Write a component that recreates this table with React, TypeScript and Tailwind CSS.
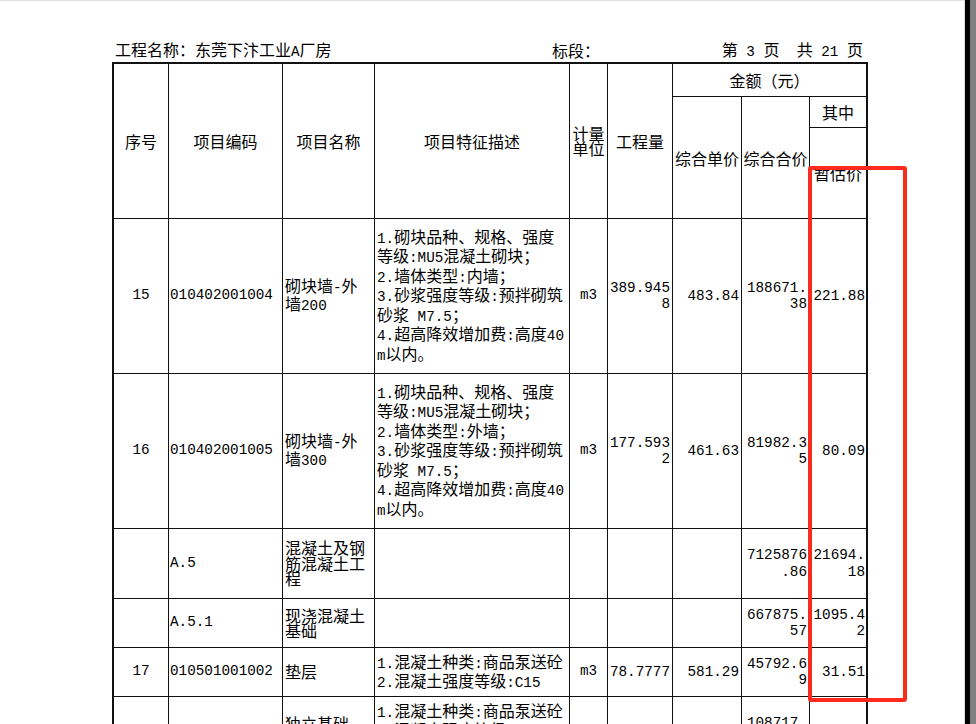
import React from "react";

const MONO = "font-['Liberation_Mono',monospace] text-[14.3px]";

function T({ s }: { s: string }) {
  const parts = s.split(/([\x20-\x7e]+)/);
  return (
    <>
      {parts.map((p, i) =>
        p === "" ? null : /^[\x20-\x7e]+$/.test(p) ? (
          <span key={i} className={MONO}>
            {p}
          </span>
        ) : (
          <React.Fragment key={i}>{p}</React.Fragment>
        )
      )}
    </>
  );
}

type Row = {
  no: string;
  code: string;
  name: string[];
  desc: string[];
  unit: string;
  qty: string[];
  price: string[];
  total: string[];
  est: string[];
};

const rows: Row[] = [
  {
    no: "15",
    code: "010402001004",
    name: ["砌块墙-外", "墙200"],
    desc: [
      "1.砌块品种、规格、强度",
      "等级:MU5混凝土砌块；",
      "2.墙体类型:内墙；",
      "3.砂浆强度等级:预拌砌筑",
      "砂浆 M7.5；",
      "4.超高降效增加费:高度40",
      "m以内。",
    ],
    unit: "m3",
    qty: ["389.945", "8"],
    price: ["483.84"],
    total: ["188671.", "38"],
    est: ["221.88"],
  },
  {
    no: "16",
    code: "010402001005",
    name: ["砌块墙-外", "墙300"],
    desc: [
      "1.砌块品种、规格、强度",
      "等级:MU5混凝土砌块；",
      "2.墙体类型:外墙；",
      "3.砂浆强度等级:预拌砌筑",
      "砂浆 M7.5；",
      "4.超高降效增加费:高度40",
      "m以内。",
    ],
    unit: "m3",
    qty: ["177.593", "2"],
    price: ["461.63"],
    total: ["81982.3", "5"],
    est: ["80.09"],
  },
  {
    no: "",
    code: "A.5",
    name: ["混凝土及钢", "筋混凝土工", "程"],
    desc: [],
    unit: "",
    qty: [],
    price: [],
    total: ["7125876", ".86"],
    est: ["21694.", "18"],
  },
  {
    no: "",
    code: "A.5.1",
    name: ["现浇混凝土", "基础"],
    desc: [],
    unit: "",
    qty: [],
    price: [],
    total: ["667875.", "57"],
    est: ["1095.4", "2"],
  },
  {
    no: "17",
    code: "010501001002",
    name: ["垫层"],
    desc: ["1.混凝土种类:商品泵送砼", "2.混凝土强度等级:C15"],
    unit: "m3",
    qty: ["78.7777"],
    price: ["581.29"],
    total: ["45792.6", "9"],
    est: ["31.51"],
  },
  {
    no: "18",
    code: "010501003001",
    name: ["独立基础、", "桩承台基础"],
    desc: ["1.混凝土种类:商品泵送砼", "2.混凝土强度等级:C30", "3.部位:承台"],
    unit: "m3",
    qty: ["54.2134"],
    price: ["581.29"],
    total: ["108717.", "35"],
    est: ["74.86"],
  },
];

function Cell({ className = "", children }: { className?: string; children?: React.ReactNode }) {
  return <div className={"bg-white flex items-center min-w-0 " + className}>{children}</div>;
}

function Num({ v, pr = "pr-[2px]" }: { v: string[]; pr?: string }) {
  return (
    <Cell>
      <div className={"w-full text-right whitespace-pre leading-[16.5px] " + pr + " " + MONO}>
        {v.map((l, i) => (
          <div key={i}>{l}</div>
        ))}
      </div>
    </Cell>
  );
}

export default function App() {
  return (
    <div className="relative flex h-[724px] w-[976px] overflow-hidden bg-white text-black font-['Noto_Sans_CJK_SC',sans-serif] text-[16px]">
      <div className="flex-1 border-t border-[#e0e0e0] pl-[112px] pt-[40px]">
        <div className="flex h-[18px] w-[756px] items-center leading-[18px] whitespace-pre">
          <div className="w-[440px] pl-[3px]">
            <T s="工程名称：东莞下汴工业A厂房" />
          </div>
          <div>标段：</div>
          <div className="ml-auto pr-[5px]">
            <T s="第 3 页  共 21 页" />
          </div>
        </div>
        <div className="mt-[3px] grid w-fit gap-px border-2 border-[#111] bg-[#111] grid-cols-[54px_113px_91px_194px_37px_64px_68px_67px_56px] grid-rows-[32px_30px_90px_154px_154px_69px_48px_48px_68px]">
          {/* header */}
          <Cell className="row-span-3 justify-center">序号</Cell>
          <Cell className="row-span-3 justify-center">项目编码</Cell>
          <Cell className="row-span-3 justify-center">项目名称</Cell>
          <Cell className="row-span-3 justify-center">项目特征描述</Cell>
          <Cell className="row-span-3 justify-center">
            <div className="text-center leading-[15.5px]">
              计量
              <br />
              单位
            </div>
          </Cell>
          <Cell className="row-span-3 justify-center">工程量</Cell>
          <Cell className="col-span-3 justify-center">金额（元）</Cell>
          <Cell className="row-span-2 justify-center whitespace-nowrap">综合单价</Cell>
          <Cell className="row-span-2 justify-center whitespace-nowrap">综合合价</Cell>
          <Cell className="justify-center">其中</Cell>
          <Cell className="justify-center">暂估价</Cell>

          {rows.map((r, i) => (
            <React.Fragment key={i}>
              <Cell className="justify-center">
                <span className={MONO}>{r.no}</span>
              </Cell>
              <Cell className="pl-[1px]">
                <T s={r.code} />
              </Cell>
              <Cell className="pl-[2px]">
                <div className="leading-[15.5px] whitespace-pre">
                  {r.name.map((l, j) => (
                    <div key={j}>
                      <T s={l} />
                    </div>
                  ))}
                </div>
              </Cell>
              <Cell className="pl-[2px]">
                <div className="leading-[16.4px] whitespace-pre">
                  {r.desc.map((l, j) => (
                    <div key={j}>
                      <T s={l} />
                    </div>
                  ))}
                </div>
              </Cell>
              <Cell className="justify-center">
                <span className={MONO}>{r.unit}</span>
              </Cell>
              <Num v={r.qty} />
              <Num v={r.price} />
              <Num v={r.total} />
              <Num v={r.est} pr="pr-[1px]" />
            </React.Fragment>
          ))}
        </div>
      </div>
      <div className="flex h-full w-[12px] shrink-0">
        <div className="w-px bg-[#dcdcdc]" />
        <div className="w-[5px] bg-black" />
        <div className="w-[6px] bg-[#808080]" />
      </div>
      <div className="pointer-events-none absolute left-[808px] top-[166px] h-[536px] w-[99px] rounded-[3px] border-4 border-[#fd2a1e]" />
    </div>
  );
}
